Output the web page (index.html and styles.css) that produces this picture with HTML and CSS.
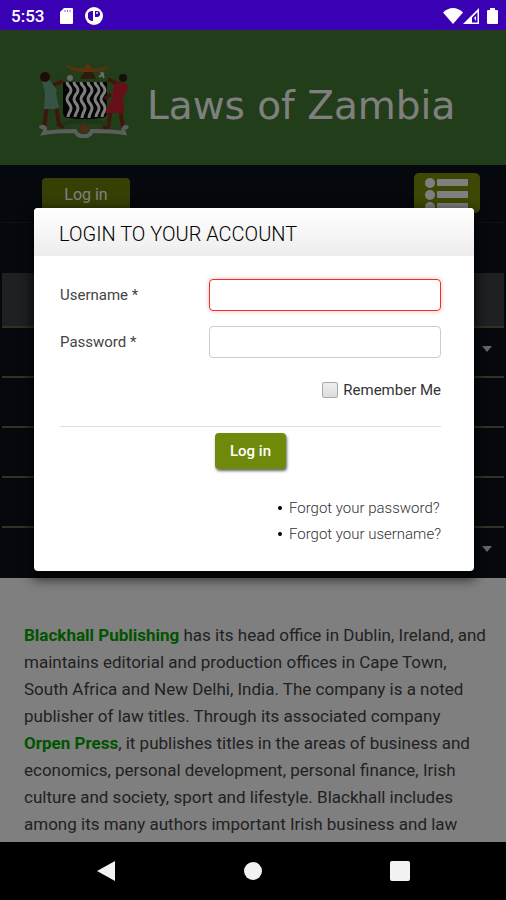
FILE: index.html
```html
<!DOCTYPE html>
<html lang="en">
<head>
    <meta charset="UTF-8">
    <meta name="viewport" content="width=device-width, initial-scale=1">
    <title>Laws of Zambia</title>
    <link rel="stylesheet" href="styles.css">
</head>
<body>
    <div class="status-bar">
        <span class="clock">5:53</span>
        <svg class="sd-icon" width="13" height="16" viewBox="0 0 13 16"><path fill="#fff" d="M4 0h8a1 1 0 0 1 1 1v14a1 1 0 0 1-1 1H1a1 1 0 0 1-1-1V4z"/><path stroke="#8a66d2" d="M5 2v2M7.500 2v2M10 2v2"/></svg>
        <svg width="18" height="18" viewBox="0 0 18 18"><circle cx="9" cy="9" r="9" fill="#fff"/><path fill="#3a00b3" d="M3 6a5 5 0 0 1 5-2v10a5 5 0 0 1-5-3z"/><path fill="#3a00b3" d="M10 4h2a3 3 0 0 1 0 6h-2z"/><circle cx="12" cy="6" r="1" fill="#fff"/></svg>
        <div class="signals">
            <svg width="20" height="16" viewBox="0 0 20 16"><path fill="#fff" d="M10 16 0 4.500C6-1.500 14-1.500 20 4.500z"/></svg>
            <svg width="16" height="16" viewBox="0 0 16 16"><path fill="#fff" fill-rule="evenodd" d="M16 0v16H0zM14.500 4 9 9.500v5h5.500z"/><path fill="#fff" d="M11 10l2-2v5z"/></svg>
            <svg class="battery" width="11" height="16" viewBox="0 0 11 16"><path fill="#fff" d="M3 0h5v2h2a1 1 0 0 1 1 1v12a1 1 0 0 1-1 1H1a1 1 0 0 1-1-1V3a1 1 0 0 1 1-1h2z"/></svg>
        </div>
    </div>

    <div class="page">
        <header>
            <svg class="crest" width="92" height="74" viewBox="0 0 92 74">
                <!-- eagle -->
                <path fill="#b8641c" d="M26 1c7 2 13 4 19 3l2-4 4 1 1 3c6 1 13 0 19-3-3 5-9 7-16 7l1 5H44l1-5c-7 0-15-2-19-7z"/>
                <path fill="#5b3a1c" d="M45 8h9l3 7H41z"/>
                <path stroke="#ddd" stroke-width="2" d="m62 8 3 6m0-5-5 4"/>
                <circle cx="31" cy="14" r="3" fill="#ccc"/>
                <!-- shield -->
                <path fill="#0b0b0b" d="M24 18h44v30c0 4-2 6-6 6l-16 2-16-2c-4 0-6-2-6-6z"/>
                <g fill="none" stroke="#fff" stroke-width="3">
                    <path d="M28 18c0 4 4 4 4 8s-4 5-4 9 4 5 4 9-3 5-3 9"/>
                    <path d="M35 18c0 4 4 4 4 8s-4 5-4 9 4 5 4 9-3 5-3 9"/>
                    <path d="M42 18c0 4 4 4 4 8s-4 5-4 9 4 5 4 9-3 5-3 10"/>
                    <path d="M49 18c0 4 4 4 4 8s-4 5-4 9 4 5 4 9-3 5-3 10"/>
                    <path d="M56 18c0 4 4 4 4 8s-4 5-4 9 4 5 4 9-3 5-3 9"/>
                    <path d="M62 18c0 4 4 4 4 8s-4 5-4 9 4 5 4 9-3 5-3 9"/>
                </g>
                <!-- supporters -->
                <path stroke="#7d2d18" stroke-width="4" fill="none" d="m8 41-3 22M17 41l3 20 5 2M13 22l11-5M82 22l-13-7M72 44l-3 19-5 1M81 44l3 20M72 30l-6 5"/>
                <path fill="#6fa78d" d="m3 17 7-2 8 11-1 4 3 14-5 1H5l1-16z"/>
                <circle cx="6" cy="13" r="5" fill="#3a1a10"/>
                <path fill="#cf1f30" d="m75 20 6-2 7 2 1 5-5 9 1 15H66l7-15z"/>
                <circle cx="84" cy="14" r="4" fill="#2c1c12"/>
                <path stroke="#3f6b34" stroke-width="4" d="M23 60c14-4 30-4 46 0" fill="none"/>
                <!-- motto ribbon -->
                <path fill="none" stroke="#bbb" stroke-width="4" d="M1 64c3-3 7 0 4 5 12-2 23-2 31-2 2 4 6 6 9 5 3 1 7-2 8-5 10 0 21 0 32 2-2-5 1-7 4-5"/>
                <path fill="#bd4b22" d="m44 60 6 3-4 6-5-4z"/>
            </svg>
            <h1>Laws of Zambia</h1>
        </header>

        <nav>
            <div class="toolbar">
                <a class="login-link" href="#login">Log in</a>
                <button class="menu-btn" type="button" aria-label="Menu">
                    <svg width="44" height="34" viewBox="0 0 44 34" fill="#fff">
                        <circle cx="5" cy="5" r="5"/><rect x="12" y="1" width="31" height="7" rx="1"/>
                        <circle cx="5" cy="17" r="5"/><rect x="12" y="13" width="31" height="7" rx="1"/>
                        <circle cx="5" cy="29" r="5"/><rect x="12" y="25" width="31" height="7" rx="1"/>
                    </svg>
                </button>
            </div>
            <ul class="menu">
                <li class="blank"></li>
                <li class="active"></li>
                <li class="parent"></li>
                <li></li>
                <li></li>
                <li></li>
                <li class="parent"></li>
            </ul>
        </nav>

        <main>
            <p><a href="#">Blackhall Publishing</a> has its head office in Dublin, Ireland, and maintains editorial and production offices in Cape Town, South Africa and New Delhi, India. The company is a noted publisher of law titles. Through its associated company <a href="#">Orpen Press</a>, it publishes titles in the areas of business and economics, personal development, personal finance, Irish culture and society, sport and lifestyle. Blackhall includes among its many authors important Irish business and law</p>
        </main>

        <div class="overlay">
            <div class="modal" id="login">
                <h2>LOGIN TO YOUR ACCOUNT</h2>
                <form>
                    <div class="field">
                        <label for="username">Username *</label>
                        <input class="invalid" type="text" id="username" name="username">
                    </div>
                    <div class="field">
                        <label for="password">Password *</label>
                        <input type="password" id="password" name="password">
                    </div>
                    <div class="remember">
                        <input type="checkbox" id="remember" name="remember">
                        <label for="remember">Remember Me</label>
                    </div>
                    <div class="submit">
                        <button type="submit">Log in</button>
                    </div>
                    <ul class="forgot">
                        <li><a href="#">Forgot your password?</a></li>
                        <li><a href="#">Forgot your username?</a></li>
                    </ul>
                </form>
            </div>
        </div>
    </div>

    <div class="nav-bar">
        <button type="button" aria-label="Back"><svg width="20" height="22" viewBox="0 0 20 22"><path fill="#f2f2f2" d="M19 1v20L1 11z"/></svg></button>
        <button type="button" aria-label="Home"><svg width="20" height="20" viewBox="0 0 20 20"><circle cx="10" cy="10" r="9" fill="#f2f2f2"/></svg></button>
        <button type="button" aria-label="Recent apps"><svg width="20" height="20" viewBox="0 0 20 20"><rect width="20" height="20" rx="2" fill="#f2f2f2"/></svg></button>
    </div>
</body>
</html>
```
FILE: styles.css
```css
* {
    box-sizing: border-box;
}

body {
    margin: 0;
    height: 100vh;
    display: flex;
    flex-direction: column;
    font-family: Roboto, sans-serif;
    font-size: 17px;
    color: #444;
}

svg {
    display: block;
}

h1, h2, p, ul {
    margin: 0;
    padding: 0;
}

/* phone bars */
.status-bar {
    display: flex;
    align-items: center;
    height: 30px;
    padding: 2px 8px 0 11px;
    background: #3a00b3;
    color: white;
}

.clock {
    font-weight: 500;
}

.sd-icon {
    margin: 0 12px 0 16px;
}

.signals {
    display: flex;
    margin-left: auto;
}

.battery {
    margin-left: 8px;
}

.nav-bar {
    display: flex;
    justify-content: space-around;
    align-items: center;
    height: 58px;
    padding: 0 32px;
    background: black;
}

.nav-bar button {
    padding: 0;
    border: none;
    background: none;
}

/* page */
.page {
    position: relative;
    flex: 1;
    min-height: 0;
    overflow: hidden;
    background: white;
}

header {
    display: flex;
    align-items: center;
    height: 135px;
    padding: 6px 40px 0 39px;
    background: #427a33;
}

h1 {
    margin-left: 16px;
    padding-top: 10px;
    font-family: "DejaVu Sans", sans-serif;
    font-size: 39px;
    font-weight: normal;
    white-space: nowrap;
    color: white;
}

nav {
    padding: 0 2px;
    background: #0b121c;
}

.toolbar {
    display: flex;
    justify-content: space-between;
    align-items: flex-start;
    height: 58px;
    padding: 8px 24px 0 40px;
    border-bottom: 1px solid #1d242c;
}

.login-link {
    width: 88px;
    margin-top: 5px;
    border-radius: 4px;
    background: #6c8108;
    color: white;
    font-size: 16px;
    line-height: 34px;
    text-align: center;
    text-decoration: none;
}

.menu-btn {
    width: 66px;
    height: 40px;
    padding: 5px 11px;
    border: none;
    border-radius: 5px;
    background: #7c9109;
}

.menu {
    list-style: none;
}

.menu li {
    display: flex;
    justify-content: flex-end;
    height: 50px;
    padding: 18px 12px 0 0;
    border-bottom: 2px solid #5c6a4e;
}

.menu li.blank,
.menu li:last-child {
    border-bottom: none;
}

.menu li.active {
    height: 55px;
    background: #3c4044;
}

.menu .parent::after {
    content: "";
    height: 6px;
    border: 5px solid transparent;
    border-top: 6px solid #ccc;
    border-bottom: none;
}

main {
    padding: 44px 17px 0 24px;
    line-height: 27px;
}

main a {
    color: #00a800;
    font-weight: bold;
    text-decoration: none;
}

/* login window */
.overlay {
    position: absolute;
    inset: 0;
    padding: 178px 32px 0 34px;
    background: rgba(0, 0, 0, 0.5);
}

.modal {
    border-radius: 4px;
    background: white;
    box-shadow: 0 5px 12px 3px rgba(0, 0, 0, 0.7);
    font-size: 15px;
}

h2 {
    padding: 4px 25px 0;
    border-radius: 4px 4px 0 0;
    background: linear-gradient(white, #ededed);
    font-size: 20px;
    font-weight: 300;
    line-height: 44px;
    color: black;
}

form {
    padding: 23px 33px 24px 26px;
}

.field {
    display: flex;
    align-items: center;
    justify-content: space-between;
    margin-bottom: 15px;
}

.field input {
    width: 61%;
    height: 32px;
    padding: 4px 6px;
    border: 1px solid #ccc;
    border-radius: 4px;
    font-size: 15px;
}

.field input.invalid {
    border-color: #e9322d;
    box-shadow: 0 0 5px #f8b9b7;
}

.remember {
    display: flex;
    justify-content: flex-end;
    align-items: center;
    height: 34px;
    color: #333;
}

.remember input {
    appearance: none;
    width: 16px;
    height: 16px;
    margin: 0 5px 0 0;
    border: 1px solid #aaa;
    border-radius: 2px;
    background: linear-gradient(#eee, #ddd);
}

.submit {
    margin-top: 19px;
    padding-top: 6px;
    border-top: 1px solid #ddd;
    text-align: center;
}

.submit button {
    width: 71px;
    height: 36px;
    padding: 0;
    border: none;
    border-radius: 4px;
    background: #6f8a0a;
    box-shadow: 1px 2px 3px rgba(0, 0, 0, 0.6);
    color: white;
    font-family: inherit;
    font-size: 15px;
    font-weight: 500;
}

.forgot {
    width: fit-content;
    margin: 26px 0 0 auto;
    line-height: 26px;
    list-style: none;
}

.forgot li {
    display: flex;
    align-items: center;
}

.forgot li::before {
    content: "";
    width: 4px;
    height: 4px;
    margin-right: 7px;
    border-radius: 50%;
    background: black;
}

.forgot a {
    color: #333;
    font-weight: 300;
    text-decoration: none;
}
```
